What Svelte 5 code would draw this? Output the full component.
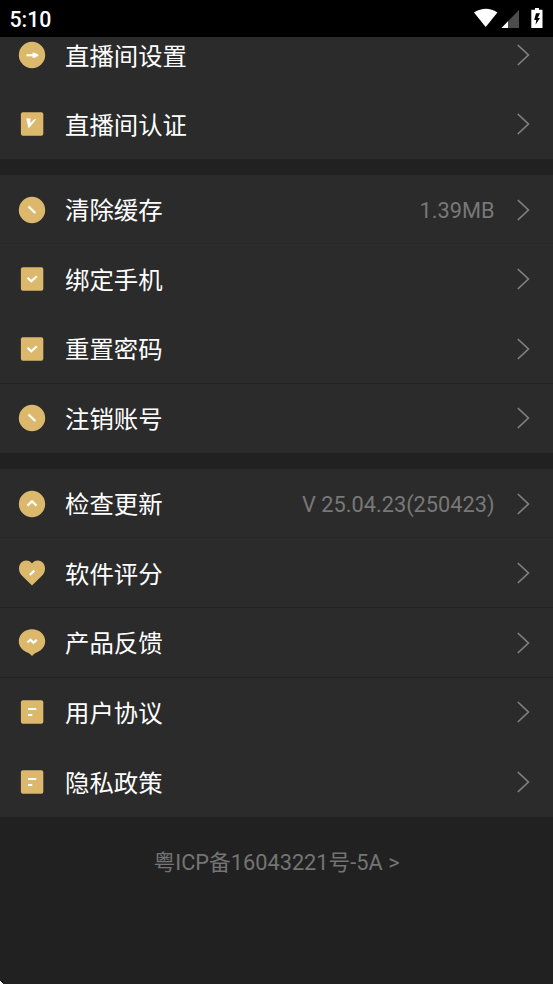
<script>
  const groups = [
    [
      { icon: 'arrow', label: '直播间设置' },
      { icon: 'verify', label: '直播间认证' }
    ],
    [
      { icon: 'slash', label: '清除缓存', value: '1.39MB', line: 'soft' },
      { icon: 'check', label: '绑定手机' },
      { icon: 'check', label: '重置密码', line: 'strong' },
      { icon: 'slash', label: '注销账号' }
    ],
    [
      { icon: 'up', label: '检查更新', value: 'V 25.04.23(250423)', line: 'soft' },
      { icon: 'heart', label: '软件评分', line: 'strong' },
      { icon: 'bubble', label: '产品反馈', line: 'strong' },
      { icon: 'doc', label: '用户协议' },
      { icon: 'doc', label: '隐私政策' }
    ]
  ];
  const round = ['arrow', 'slash', 'up'];
  const square = ['verify', 'check', 'doc'];
</script>

<div class="screen">
  <header>
    <span class="time">5:10</span>
    <svg class="status" width="71" height="20" viewBox="0 0 71 20">
      <path d="M0 4.500Q12 -3 23.400 4.500L11.700 19Z" fill="#fff" />
      <path d="M45 2V20H27.500Z" fill="#4c4c4c" />
      <path d="M34 13.300V20H27.500Z" fill="#fff" />
      <path d="M61 0h4v1.700h3.500V20H57.300V1.700H61Z" fill="#fff" />
      <path d="M62 5.200H66L63.700 10H66L61.500 16.800L62.300 12H60.200Z" fill="#000" />
    </svg>
  </header>

  <main>
    {#each groups as rows}
      <section>
        {#each rows as row}
          <div class="row {row.line ?? ''}">
            <svg class="icon" width="28" height="28" viewBox="0 0 28 28">
              {#if round.includes(row.icon)}
                <circle cx="14" cy="14" r="13.200" />
              {:else if square.includes(row.icon)}
                <rect x="2.900" y="2.200" width="22.400" height="23.600" rx="2" />
              {:else if row.icon === 'heart'}
                <path d="M14 26.600L3.300 16C-1 11 .8 1.500 8.300 1.500C10.800 1.500 12.800 2.700 14 4.500C15.200 2.700 17.200 1.500 19.700 1.500C27.200 1.500 29 11 24.700 16Z" />
              {:else}
                <path d="M14 .3C21.600 .3 27.200 5.700 27.200 12.300C27.200 18.300 22.800 22.100 18 23.800Q16 24.500 14 27Q12 24.500 10 23.800C5.200 22.100 .8 18.300 .8 12.300C.8 5.700 6.400 .3 14 .3Z" />
              {/if}
              <g class="mark">
                {#if row.icon === 'arrow'}
                  <path d="M8.500 14.200H19.500" />
                  <path class="solid" d="M14.500 11.800L17 11.800L20.800 14.200L17 16.800L14.500 16.800Z" />
                {:else if row.icon === 'verify'}
                  <path class="solid" d="M8.200 8.600H12.500L12.300 13.300L16.300 9.200H18.300L10.600 18.500Z" />
                {:else if row.icon === 'slash'}
                  <path d="M10.500 10.500L17.300 17" />
                {:else if row.icon === 'check'}
                  <path d="M9.500 12.700L13.300 16.300L18.800 11.200" />
                {:else if row.icon === 'up'}
                  <path d="M9.400 15.600L14 11.300L18.500 15.600" />
                {:else if row.icon === 'heart'}
                  <path d="M11.800 16L16.300 11.600" />
                {:else if row.icon === 'bubble'}
                  <path d="M9.400 13.500L12.500 10.700L15.500 13.700L18.800 10.700" />
                {:else}
                  <path d="M10 11H18.200M10 17H14.200" />
                {/if}
              </g>
            </svg>
            <span class="label">{row.label}</span>
            {#if row.value}<span class="value">{row.value}</span>{/if}
            <svg class="chevron" width="14" height="22" viewBox="0 0 14 22">
              <path d="M.8 1L11.400 11L.8 21" />
            </svg>
          </div>
        {/each}
      </section>
    {/each}
    <footer>粤ICP备16043221号-5A &gt;</footer>
  </main>
  <i class="corner"></i>
</div>

<style>
  :global(body) {
    background: #212121;
  }
  .screen {
    position: relative;
    height: 984px;
    display: flex;
    flex-direction: column;
    overflow: hidden;
    background: #212121;
    font-family: Roboto, "Noto Sans CJK SC", sans-serif;
  }
  header {
    box-sizing: border-box;
    flex: none;
    height: 37px;
    padding: 0 8px 0 9.500px;
    display: flex;
    align-items: center;
    justify-content: space-between;
    background: #000;
    color: #fff;
  }
  .time {
    font-size: 21.300px;
    font-weight: 500;
    line-height: 37px;
    padding-top: 2px;
  }
  .status {
    flex: none;
    margin-bottom: 1px;
  }
  main {
    flex: 1;
    min-height: 0;
    overflow: hidden;
    display: flex;
    flex-direction: column;
    gap: 15.500px;
  }
  section {
    flex: none;
    background: #2b2b2b;
  }
  section:first-child {
    margin-top: -17px;
  }
  section:first-child .label {
    padding-top: 4px;
  }
  .row {
    box-sizing: border-box;
    height: 69.640px;
    padding: 1px 22.500px 0 18px;
    display: flex;
    align-items: center;
    border-bottom: 1px solid transparent;
  }
  .soft {
    border-bottom-color: #272727;
  }
  .strong {
    border-bottom-color: #222;
  }
  .icon {
    flex: none;
    margin-right: 19px;
    fill: #dcb86c;
  }
  .mark {
    fill: none;
    stroke: #fff;
    stroke-width: 2.200;
  }
  .solid {
    fill: #fff;
    stroke: none;
  }
  .label {
    flex: 1;
    color: #fff;
    font-size: 24.400px;
    line-height: 36px;
    padding-top: 3px;
  }
  .value {
    color: #787878;
    font-size: 21.750px;
    line-height: 30px;
    padding-top: 3px;
    margin-right: 22px;
  }
  .chevron {
    flex: none;
    fill: none;
    stroke: #808080;
    stroke-width: 1.700;
  }
  footer {
    color: #747474;
    font-size: 21.750px;
    line-height: 30px;
    margin-top: 16px;
    text-align: center;
  }
  .corner {
    position: absolute;
    left: 0;
    bottom: 0;
    width: 3px;
    height: 3px;
    background: linear-gradient(45deg, #fff 50%, #000 51%);
  }
</style>
